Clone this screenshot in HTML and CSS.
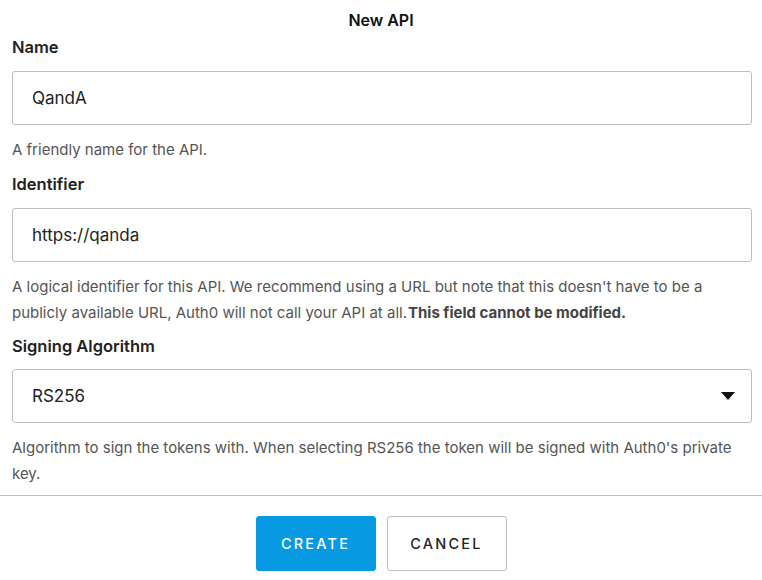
FILE: index.html
```html
<!DOCTYPE html>
<html>
<head>
<meta charset="utf-8">
<link rel="stylesheet" href="styles.css">
</head>
<body>
<div class="dialog">
  <h1 class="title">New API</h1>
  <div class="content">
    <div class="field">
      <label class="label">Name</label>
      <div class="input">QandA</div>
      <p class="help">A friendly name for the API.</p>
    </div>
    <div class="field">
      <label class="label">Identifier</label>
      <div class="input">https://qanda</div>
      <p class="help">A logical identifier for this API. We recommend using a URL but note that this doesn't have to be a publicly available URL, Auth0 will not call your API at all.<strong>This field cannot be modified.</strong></p>
    </div>
    <div class="field">
      <label class="label">Signing Algorithm</label>
      <div class="input select">
        <span>RS256</span>
        <svg class="caret" width="14" height="8" viewBox="0 0 14 8"><path d="M0 0 H14 L7 8 Z" fill="#111"/></svg>
      </div>
      <p class="help">Algorithm to sign the tokens with. When selecting RS256 the token will be signed with Auth0's private key.</p>
    </div>
  </div>
  <div class="footer">
    <button class="btn primary">CREATE</button>
    <button class="btn secondary">CANCEL</button>
  </div>
</div>
</body>
</html>
```
FILE: styles.css
```css
* { box-sizing: border-box; }
html, body { margin: 0; padding: 0; background: #fff; }
body {
  font-family: Inter, "Noto Sans", sans-serif;
  color: #222;
  width: 762px;
}
.dialog { display: flex; flex-direction: column; }
.title {
  margin: 0;
  padding-top: 10px;
  font-size: 16px;
  line-height: 20px;
  font-weight: 600;
  text-align: center;
  color: #111;
}
.content { padding: 0 10px 0 12px; display: flex; flex-direction: column; }
.field { display: flex; flex-direction: column; }
.label {
  margin-top: 9px;
  font-size: 16.5px;
  line-height: 24px;
  font-weight: 600;
  color: #222;
}
.field:first-child .label { margin-top: 5px; }
.field:last-child .label { margin-top: 8px; }
.field:last-child .input { margin-top: 11px; }
.input {
  margin-top: 12px;
  height: 54px;
  border: 1px solid #bdbdbd;
  border-radius: 3px;
  padding: 0 19px;
  display: flex;
  align-items: center;
  font-size: 17px;
  color: #222;
}
.select { justify-content: space-between; padding-right: 16px; }
.caret { display: block; }
.help {
  margin: 12px 0 0;
  font-size: 15px;
  line-height: 26px;
  color: #555;
}
.help strong { font-weight: 700; color: #444; margin-left: 1px; }
.footer {
  margin-top: 8px;
  border-top: 1px solid #bdbdbd;
  padding-top: 20px;
  display: flex;
  justify-content: center;
  gap: 11px;
}
.btn {
  width: 120px;
  height: 55px;
  border-radius: 3px;
  font-family: Inter, "Noto Sans", sans-serif;
  font-size: 14.5px;
  font-weight: 500;
  letter-spacing: 2.2px;
  cursor: pointer;
}
.primary { background: #079ae2; border: 1px solid #079ae2; color: #fff; }
.secondary { background: #fff; border: 1px solid #bdbdbd; color: #222; }
```
